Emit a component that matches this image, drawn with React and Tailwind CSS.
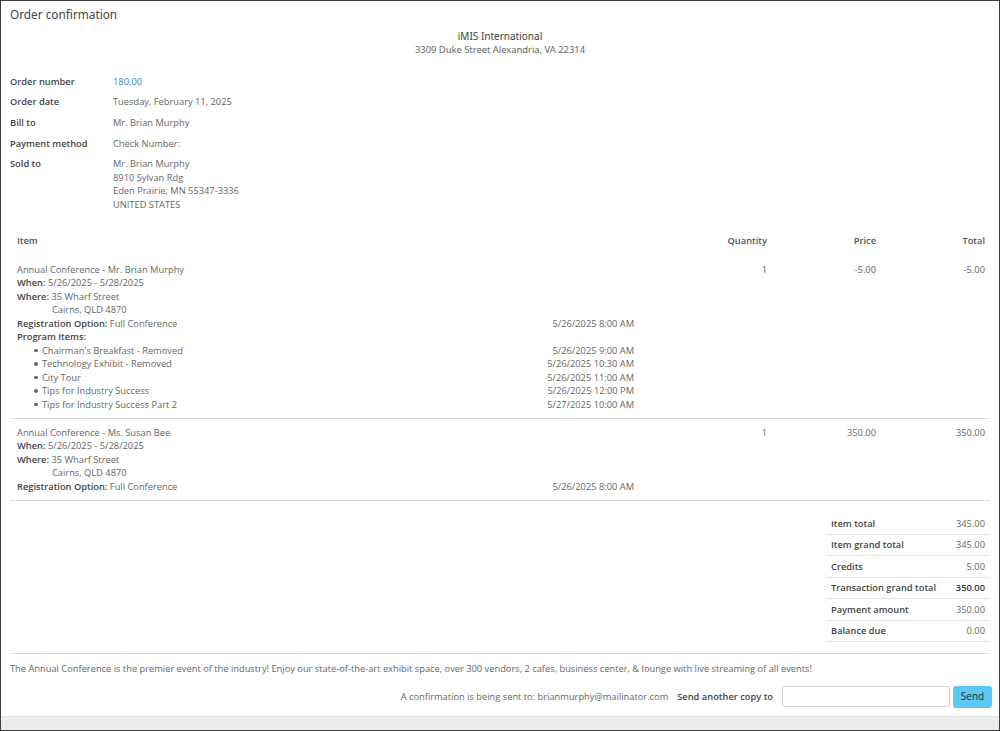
import React from "react";

const L = ({ children, date, className = "" }) => (
  <div className={"flex justify-between h-[13.5px] leading-[13.5px] " + className}>
    <div className="whitespace-nowrap">{children}</div>
    {date ? <div className="whitespace-nowrap">{date}</div> : null}
  </div>
);

const B = ({ children }) => <span className="font-semibold text-[#444]">{children}</span>;

const Bullet = ({ children, date }) => (
  <div className="flex justify-between h-[13.5px] leading-[13.5px]">
    <div className="flex items-center whitespace-nowrap">
      <span className="w-[25px] pl-[17px] flex items-center">
        <span className="block w-[3.5px] h-[3.5px] rounded-full bg-[#666]" />
      </span>
      <span>{children}</span>
    </div>
    <div className="whitespace-nowrap">{date}</div>
  </div>
);

const InfoRow = ({ label, children }) => (
  <div className="grid grid-cols-[103px_1fr] py-[3.6px] leading-[13.5px]">
    <div className="font-semibold text-[#444]">{label}</div>
    <div>{children}</div>
  </div>
);

const SumRow = ({ label, value, bold }) => (
  <div className="flex justify-between items-center h-[21.5px] px-[5px] border-b border-[#e3e3e3]">
    <span className="font-semibold text-[#444]">{label}</span>
    <span className={bold ? "font-semibold text-[#333]" : ""}>{value}</span>
  </div>
);

export default function App() {
  return (
    <div className="w-[1000px] h-[731px] border border-[#3d3d3d] bg-white flex flex-col overflow-hidden font-['Open_Sans',sans-serif] text-[9.3px] text-[#666]">
      <div className="h-[28px] flex items-center pl-[9px] text-[11.8px] text-[#444] font-['Noto_Sans',sans-serif]">
        Order confirmation
      </div>
      <div className="text-center font-['Noto_Sans',sans-serif]">
        <div className="leading-[14px] text-[10px] text-[#444]">iMIS International</div>
        <div className="leading-[14px] text-[9.4px] text-[#666]">3309 Duke Street Alexandria, VA 22314</div>
      </div>

      <div className="mt-[14px] px-[9px]">
        <InfoRow label="Order number">
          <span className="text-[#2b87b5]">180.00</span>
        </InfoRow>
        <InfoRow label="Order date">Tuesday, February 11, 2025</InfoRow>
        <InfoRow label="Bill to">Mr. Brian Murphy</InfoRow>
        <InfoRow label="Payment method">Check Number:</InfoRow>
        <InfoRow label="Sold to">
          <div>Mr. Brian Murphy</div>
          <div>8910 Sylvan Rdg</div>
          <div>Eden Prairie, MN 55347-3336</div>
          <div>UNITED STATES</div>
        </InfoRow>
      </div>

      <div className="mx-[9px] mt-[12px]">
        <div className="grid grid-cols-[617px_133px_109px_109px] pl-[7px] pr-[5px] h-[28px] items-center font-semibold text-[#555]">
          <div>Item</div>
          <div className="text-right">Quantity</div>
          <div className="text-right">Price</div>
          <div className="text-right">Total</div>
        </div>

        <div className="grid grid-cols-[617px_133px_109px_109px] pl-[7px] pr-[5px] pt-[8px] pb-[7px] border-b border-[#dcdcdc]">
          <div>
            <L>Annual Conference - Mr. Brian Murphy</L>
            <L><B>When:</B> 5/26/2025 - 5/28/2025</L>
            <L><B>Where:</B> 35 Wharf Street</L>
            <L><span className="pl-[35px]">Cairns, QLD 4870</span></L>
            <L date="5/26/2025 8:00 AM"><B>Registration Option:</B> Full Conference</L>
            <L><B>Program Items:</B></L>
            <Bullet date="5/26/2025 9:00 AM">Chairman's Breakfast - Removed</Bullet>
            <Bullet date="5/26/2025 10:30 AM">Technology Exhibit - Removed</Bullet>
            <Bullet date="5/26/2025 11:00 AM">City Tour</Bullet>
            <Bullet date="5/26/2025 12:00 PM">Tips for Industry Success</Bullet>
            <Bullet date="5/27/2025 10:00 AM">Tips for Industry Success Part 2</Bullet>
          </div>
          <div className="text-right leading-[13.5px]">1</div>
          <div className="text-right leading-[13.5px]">-5.00</div>
          <div className="text-right leading-[13.5px]">-5.00</div>
        </div>

        <div className="grid grid-cols-[617px_133px_109px_109px] pl-[7px] pr-[5px] pt-[6.5px] pb-[7px] border-b border-[#dcdcdc]">
          <div>
            <L>Annual Conference - Ms. Susan Bee</L>
            <L><B>When:</B> 5/26/2025 - 5/28/2025</L>
            <L><B>Where:</B> 35 Wharf Street</L>
            <L><span className="pl-[35px]">Cairns, QLD 4870</span></L>
            <L date="5/26/2025 8:00 AM"><B>Registration Option:</B> Full Conference</L>
          </div>
          <div className="text-right leading-[13.5px]">1</div>
          <div className="text-right leading-[13.5px]">350.00</div>
          <div className="text-right leading-[13.5px]">350.00</div>
        </div>
      </div>

      <div className="flex justify-end pr-[9px] mt-[12px]">
        <div className="w-[164px]">
          <SumRow label="Item total" value="345.00" />
          <SumRow label="Item grand total" value="345.00" />
          <SumRow label="Credits" value="5.00" />
          <SumRow label="Transaction grand total" value="350.00" bold />
          <SumRow label="Payment amount" value="350.00" />
          <SumRow label="Balance due" value="0.00" />
        </div>
      </div>

      <div className="mx-[9px] mt-[11px] border-t border-[#dcdcdc] pt-[8px] leading-[13.5px] whitespace-nowrap">
        The Annual Conference is the premier event of the industry! Enjoy our state-of-the-art exhibit space, over 300 vendors, 2 cafes, business center, &amp; lounge with live streaming of all events!
      </div>

      <div className="flex justify-end items-center mt-[10px] pr-[7px] h-[22px]">
        <span className="whitespace-nowrap">A confirmation is being sent to: brianmurphy@mailinator.com</span>
        <span className="ml-[9px] font-semibold text-[#444] whitespace-nowrap">Send another copy to</span>
        <input className="ml-[9px] w-[168px] h-[21px] border border-[#d0d0d0] rounded-[3px] bg-white outline-none" />
        <button className="ml-[3px] w-[39px] h-[22px] rounded-[3px] bg-[#5bc8f5] text-[#2a2a2a] text-[10px]">Send</button>
      </div>

      <div className="flex-1" />
      <div className="h-[14px] bg-[#ececec] border-t border-[#e2e2e2]" />
    </div>
  );
}
